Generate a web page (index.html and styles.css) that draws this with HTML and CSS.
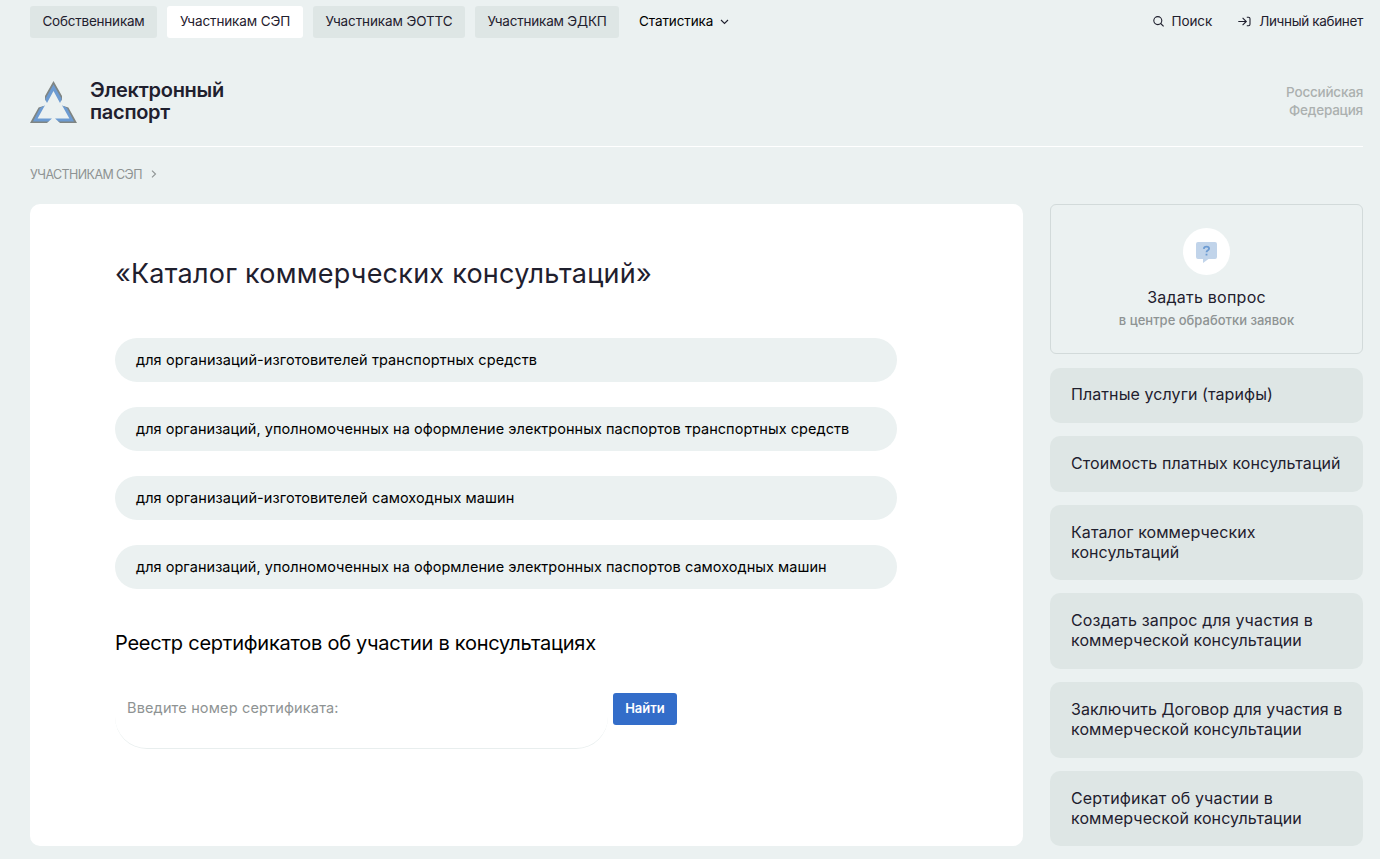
FILE: index.html
```html
<!DOCTYPE html>
<html lang="ru">
<head>
<meta charset="utf-8">
<title>Электронный паспорт</title>
<link rel="stylesheet" href="styles.css">
</head>
<body>
<div class="page">
  <nav class="topbar">
    <a class="tab tab-owners"><span>Собственникам</span></a>
    <a class="tab tab-sep tab-active"><span>Участникам СЭП</span></a>
    <a class="tab tab-eotts"><span>Участникам ЭОТТС</span></a>
    <a class="tab tab-edkp"><span>Участникам ЭДКП</span></a>
    <a class="stats"><span>Статистика</span>
      <svg class="chev" width="9" height="6" viewBox="0 0 9 6"><path d="M1 1l3.5 3.5L8 1"/></svg>
    </a>
    <a class="search">
      <svg class="line-icon" width="11" height="11" viewBox="0 0 11 11"><circle cx="4.800" cy="4.600" r="4"/><path d="M7.700 7.500l2.900 2.900"/></svg>
      <span>Поиск</span>
    </a>
    <a class="account">
      <svg class="line-icon" width="13" height="11" viewBox="0 0 13 11"><path d="M.3 5.500h8M4.600 1.800l3.700 3.700-3.700 3.700M8.800 1.200h1.700q1.500 0 1.500 1.500v5.600q0 1.500-1.500 1.500H8.800"/></svg>
      <span>Личный кабинет</span>
    </a>
  </nav>
  <header class="header">
    <svg class="logo" width="47" height="43" viewBox="0 0 47 43">
      <g fill="#7f8583">
        <path d="M23.500 0L32 15v5L23.500 6 15 20v-5z"/>
        <path d="M8.600 26.500L13.500 25 5.500 39.500H19.500L17 42H0z"/>
        <path d="M38.400 26.500L33.500 25 41.500 39.500H27.500L30 42H47z"/>
      </g>
      <g fill="#6c9bd2">
        <path d="M23.500 3.500L31.500 17.500v1.500L30 22 23.500 10 17 22 15.500 19v-1.500z"/>
        <path d="M10 27L15 24.300 7.600 37.500H22L18.500 40.500H3z"/>
        <path d="M37 27L32 24.300 39.400 37.500H25l3.500 3H44z"/>
      </g>
    </svg>
    <div class="brand">Электронный<br>паспорт</div>
    <div class="country">Российская<br>Федерация</div>
  </header>
  <div class="crumbs"><span>УЧАСТНИКАМ СЭП</span>
    <svg class="crumb-arrow" width="6" height="8" viewBox="0 0 6 8"><path d="M1 .7L4.500 4 1 7.300"/></svg>
  </div>
  <div class="columns">
    <main class="content">
      <h1>«Каталог коммерческих консультаций»</h1>
      <div class="pills">
        <a class="pill pill-short">для организаций-изготовителей транспортных средств</a>
        <a class="pill">для организаций, уполномоченных на оформление электронных паспортов транспортных средств</a>
        <a class="pill pill-short">для организаций-изготовителей самоходных машин</a>
        <a class="pill">для организаций, уполномоченных на оформление электронных паспортов самоходных машин</a>
      </div>
      <h2>Реестр сертификатов об участии в консультациях</h2>
      <div class="lookup">
        <div class="field">Введите номер сертификата:</div>
        <button class="find">Найти</button>
      </div>
    </main>
    <aside class="side">
      <div class="ask">
        <div class="ask-icon">
          <svg width="21" height="21" viewBox="0 0 21 21"><path d="M2 0h17q2 0 2 2v13q0 2-2 2h-6.500L7 21v-4H2q-2 0-2-2V2Q0 0 2 0z" fill="#c1d4ea"/><path d="M7.800 6.800Q8 4.600 10.500 4.600q2.600 0 2.600 2 0 1.200-1.400 1.900-1.200.6-1.200 1.800M10.500 11.700v1.800" fill="none" stroke="#6c9bd2" stroke-width="1.800"/></svg>
        </div>
        <div class="ask-title">Задать вопрос</div>
        <div class="ask-sub">в центре обработки заявок</div>
      </div>
      <a class="link link-first">Платные услуги (тарифы)</a>
      <a class="link">Стоимость платных консультаций</a>
      <a class="link">Каталог коммерческих<br>консультаций</a>
      <a class="link"><span class="link-wide">Создать запрос для участия в</span><br>коммерческой консультации</a>
      <a class="link"><span class="link-tight">Заключить Договор для участия в</span><br>коммерческой консультации</a>
      <a class="link"><span class="link-wide">Сертификат об участии в</span><br>коммерческой консультации</a>
    </aside>
  </div>
</div>
</body>
</html>
```
FILE: styles.css
```css
* { box-sizing: border-box; }
body {
  margin: 0;
  background: #ebf1f1;
  color: #1f202e;
  font-family: Inter, "Liberation Sans", sans-serif;
}
.page { height: 859px; padding: 6px 17px 0 30px; overflow: hidden; }
.topbar { display: flex; height: 32px; font-size: 13.500px; line-height: 31px; white-space: nowrap; }
.tab { margin-right: 10px; border-radius: 3px; background: #dee6e5; text-align: center; letter-spacing: -.12px; }
.tab-active { background: #fff; }
.tab-owners { width: 127px; letter-spacing: -.22px; }
.tab-sep { width: 136px; }
.tab-eotts { width: 152px; }
.tab-edkp { width: 144px; letter-spacing: -.2px; }
.stats { display: flex; align-items: center; gap: 7px; height: 31px; margin-left: 10px; color: #000; letter-spacing: -.1px; }
.chev, .line-icon, .crumb-arrow { fill: none; stroke: #1f202e; stroke-width: 1.100; }
.search { display: flex; align-items: center; gap: 8px; height: 31px; margin-left: auto; letter-spacing: -.1px; }
.account { display: flex; align-items: center; gap: 8px; height: 31px; margin-left: 26px; letter-spacing: -.34px; }
.header { display: flex; height: 109px; padding-top: 43px; border-bottom: 1px solid #fff; }
.brand { margin: -2px 0 0 13px; font-size: 20px; line-height: 22px; font-weight: 600; letter-spacing: -.28px; }
.country { margin: 2px 0 0 auto; color: #abb0af; font-size: 13.500px; line-height: 18px; font-weight: 500; text-align: right; letter-spacing: -.22px; }
.crumbs { display: flex; align-items: center; gap: 9px; height: 57px; padding-bottom: 2px; color: #8e9393; font-size: 12.500px; letter-spacing: -.59px; }
.crumb-arrow { margin-bottom: 2px; stroke: #8e9393; }
.columns { display: flex; justify-content: space-between; }
.content { width: 993px; height: 642px; padding: 51px 85px 0; border-radius: 10px; background: #fff; }
h1 { margin: 0; font-size: 27px; line-height: 38px; font-weight: 400; letter-spacing: .24px; white-space: nowrap; }
.pills { display: flex; flex-direction: column; gap: 25px; width: 782px; margin-top: 45px; }
.pill { height: 44px; padding-left: 21px; border-radius: 22px; background: #ebf1f1; color: #000; font-size: 14.500px; line-height: 43px; letter-spacing: .04px; white-space: nowrap; }
.pill-short { letter-spacing: .083px; }
h2 { margin: 39px 0 0; color: #000; font-size: 20px; line-height: 30px; font-weight: 400; letter-spacing: -.245px; white-space: nowrap; }
.lookup { display: flex; gap: 5px; margin-top: 10px; }
.field { width: 493px; height: 81px; padding: 29px 12px 0; border-bottom: 1px solid #e8eeee; border-radius: 32px; color: #8e9393; font-size: 14.500px; line-height: 22px; letter-spacing: .16px; }
.find { width: 64px; height: 32px; margin-top: 25px; padding: 0 0 2px; border: 0; border-radius: 3px; background: #336dc9; color: #fff; font: 600 13px Inter, sans-serif; }
.side { display: flex; flex-direction: column; gap: 13.200px; width: 313px; }
.ask { display: flex; flex-direction: column; align-items: center; height: 150px; margin-bottom: .5px; padding-top: 23px; border: 1px solid #d2dada; border-radius: 6px; }
.ask-icon { display: flex; align-items: center; justify-content: center; width: 47px; height: 47px; padding-top: 1px; border-radius: 50%; background: #fff; }
.ask-title { margin-top: 12px; font-size: 16px; line-height: 20px; letter-spacing: .24px; }
.ask-sub { margin-top: 4px; color: #8e9393; font-size: 13px; line-height: 18px; font-weight: 500; }
.link { padding: 16.900px 21px 18.400px; border-radius: 10px; background: #dee6e5; font-size: 16px; line-height: 20.100px; letter-spacing: .085px; white-space: nowrap; }
.link-first { padding-top: 16.200px; padding-bottom: 19.100px; }
.link-wide { letter-spacing: .17px; }
.link-tight { letter-spacing: .02px; }
```
